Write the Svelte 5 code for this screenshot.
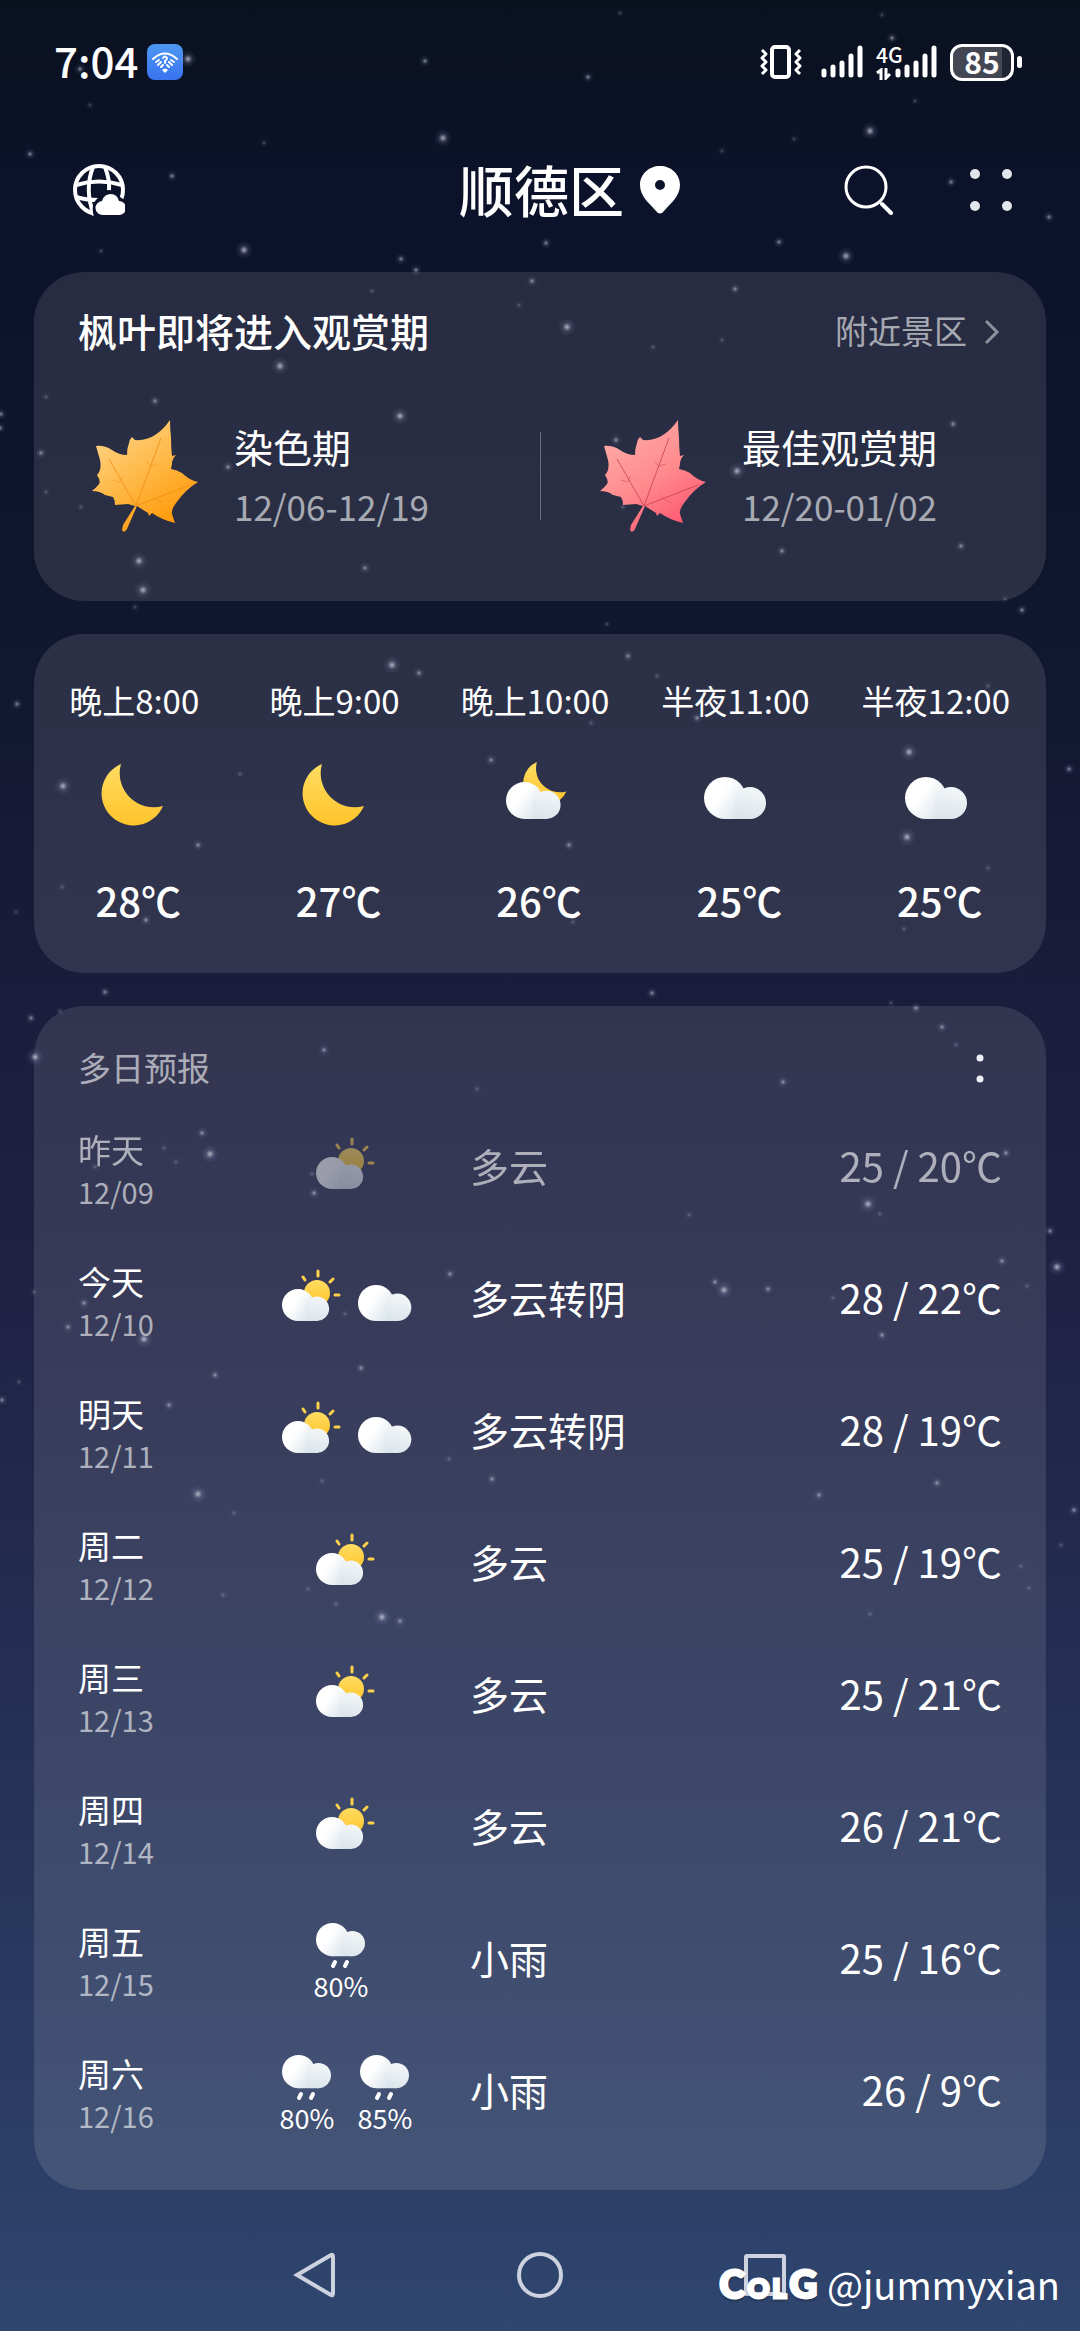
<script>
	const seasons = [
		{ name: '染色期', range: '12/06-12/19', leaf: 'gold' },
		{ name: '最佳观赏期', range: '12/20-01/02', leaf: 'red' }
	];

	const hours = [
		{ time: '晚上8:00', icon: 'moon', temp: 28 },
		{ time: '晚上9:00', icon: 'moon', temp: 27 },
		{ time: '晚上10:00', icon: 'cloudmoon', temp: 26 },
		{ time: '半夜11:00', icon: 'cloud', temp: 25 },
		{ time: '半夜12:00', icon: 'cloud', temp: 25 }
	];

	const days = [
		{ day: '昨天', date: '12/09', icons: [{ type: 'suncloud' }], text: '多云', high: 25, low: 20, past: true },
		{ day: '今天', date: '12/10', icons: [{ type: 'suncloud' }, { type: 'cloud' }], text: '多云转阴', high: 28, low: 22 },
		{ day: '明天', date: '12/11', icons: [{ type: 'suncloud' }, { type: 'cloud' }], text: '多云转阴', high: 28, low: 19 },
		{ day: '周二', date: '12/12', icons: [{ type: 'suncloud' }], text: '多云', high: 25, low: 19 },
		{ day: '周三', date: '12/13', icons: [{ type: 'suncloud' }], text: '多云', high: 25, low: 21 },
		{ day: '周四', date: '12/14', icons: [{ type: 'suncloud' }], text: '多云', high: 26, low: 21 },
		{ day: '周五', date: '12/15', icons: [{ type: 'rain', chance: 80 }], text: '小雨', high: 25, low: 16 },
		{
			day: '周六',
			date: '12/16',
			icons: [
				{ type: 'rain', chance: 80 },
				{ type: 'rain', chance: 85 }
			],
			text: '小雨',
			high: 26,
			low: 9
		}
	];

	// x, y, brightness (1 = faint, 2 = normal, 3 = bright)
	const stars = [
		[188, 59, 3], [425, 61, 2], [443, 138, 3], [90, 105, 1], [30, 154, 2], [172, 176, 2], [264, 143, 1],
		[244, 250, 3], [101, 251, 1], [80, 69, 2], [401, 259, 2], [620, 13, 1], [882, 15, 1], [892, 38, 2],
		[588, 77, 2], [915, 101, 1], [870, 131, 3], [794, 139, 1], [722, 151, 1], [951, 182, 2], [1049, 217, 2],
		[546, 243, 2], [779, 242, 2], [846, 256, 3], [416, 270, 2], [532, 281, 2], [372, 291, 1], [519, 305, 1],
		[280, 366, 3], [155, 401, 2], [400, 416, 3], [46, 397, 1], [1, 414, 2], [0, 428, 2], [41, 453, 2],
		[228, 467, 2], [46, 492, 1], [81, 507, 1], [313, 519, 1], [139, 561, 3], [143, 590, 3], [135, 607, 1],
		[365, 568, 2], [735, 289, 2], [567, 327, 3], [722, 340, 1], [653, 347, 1], [616, 440, 2], [737, 471, 3],
		[820, 437, 1], [953, 424, 2], [623, 507, 1], [782, 551, 2], [961, 546, 2], [1005, 599, 1], [1022, 610, 2],
		[392, 665, 3], [419, 673, 2], [17, 704, 2], [491, 760, 2], [240, 774, 1], [63, 786, 3], [198, 845, 2],
		[62, 887, 1], [16, 912, 1], [146, 920, 2], [109, 715, 1], [607, 624, 1], [628, 656, 2], [657, 676, 1],
		[988, 686, 1], [697, 718, 2], [591, 723, 1], [909, 752, 3], [1069, 769, 2], [569, 845, 2], [907, 837, 3],
		[988, 868, 1], [573, 922, 1], [904, 929, 1], [105, 992, 2], [31, 1018, 2], [60, 1011, 1], [35, 1057, 3],
		[324, 1050, 2], [477, 1089, 1], [202, 1133, 2], [210, 1154, 3], [164, 1148, 1], [176, 1162, 1],
		[314, 1193, 2], [312, 1174, 1], [95, 1167, 1], [95, 1281, 1], [84, 1303, 2], [68, 1327, 2], [144, 1339, 3],
		[34, 1292, 1], [450, 1274, 2], [345, 1314, 1], [361, 1368, 2], [215, 1375, 2], [19, 1382, 1], [652, 993, 2],
		[891, 1003, 1], [916, 1008, 2], [942, 1027, 2], [956, 1045, 1], [783, 1082, 2], [1006, 1153, 2],
		[868, 1204, 3], [880, 1214, 1], [689, 1215, 1], [1050, 1231, 2], [1002, 1261, 2], [1057, 1267, 3],
		[1027, 1286, 1], [715, 1282, 2], [724, 1290, 3], [768, 1289, 2], [833, 1298, 1], [882, 1335, 2],
		[169, 1405, 2], [2, 1400, 2], [198, 1494, 3], [234, 1513, 1], [322, 1481, 1], [449, 1459, 1],
		[492, 1479, 2], [819, 1495, 2], [937, 1483, 2], [1074, 1510, 2], [1061, 1545, 1], [1029, 1588, 1],
		[223, 1595, 1], [308, 1589, 1], [336, 1604, 1], [382, 1617, 3], [400, 1621, 2], [870, 1614, 1],
		[1021, 1566, 1]
	];

	const radius = [0, 5, 6, 9];
	const opacity = [0, 0.25, 0.5, 0.65];
</script>

{#snippet cloudShape()}
	<circle cx="21" cy="21" r="21" fill="url(#cloud-big)" />
	<path d="M21 42 L21 30 L42 16 L50 30 L46 42 Z" fill="url(#cloud-big)" />
	<circle cx="46" cy="26" r="16" fill="url(#cloud-small)" />
{/snippet}

{#snippet moonShape()}
	<path d="M27 10 A32 32 0 1 0 69 52 A34 34 0 0 1 27 10 Z" fill="url(#moon)" />
{/snippet}

{#snippet leafShape(color)}
	<path
		fill="url(#leaf-{color})"
		d="M92 2 Q92 12 93 19 Q93 30 94 38 L98 37 Q94 41 94 46 L93 51 Q99 52 104 55 Q111 62 120 64 Q108 71 98 85 Q93 92 94 96 L97 105 Q84 102 74 95 L71 98 L70 95 L59 88 L49 111 Q46 116 44 112 L45 107 L57 88 L50 86 L37 87 Q37 82 35 79 L27 77 Q22 73 14 73 Q19 69 21 66 Q23 63 19 57 Q24 52 22 42 L18 28 Q26 27 34 32 Q41 37 49 37 Q49 30 51 25 Q51 22 54 19 L57 22 Q68 23 77 17 Q85 12 92 2 Z"
	/>
	<g class="veins {color}">
		<path d="M58 88 L83 20 M58 88 L31 41 M58 88 L112 67" />
		<path d="M69 44 L73 48 L80 46 M35 62 L42 64 L44 58 M74 77 L78 81 L85 85" opacity="0.6" />
	</g>
{/snippet}

<svg class="defs" width="0" height="0" aria-hidden="true">
	<defs>
		<linearGradient id="cloud-big" gradientUnits="userSpaceOnUse" x1="4" y1="10" x2="44" y2="38">
			<stop offset="0.3" stop-color="#ffffff" />
			<stop offset="1" stop-color="#d3dfe8" />
		</linearGradient>
		<linearGradient id="cloud-small" gradientUnits="userSpaceOnUse" x1="48" y1="10" x2="40" y2="42">
			<stop offset="0" stop-color="#f3f6f8" />
			<stop offset="1" stop-color="#dbe5ec" />
		</linearGradient>
		<linearGradient id="moon" x1="0" y1="0" x2="0" y2="1">
			<stop offset="0" stop-color="#ffdc62" />
			<stop offset="1" stop-color="#ffc42a" />
		</linearGradient>
		<linearGradient id="leaf-gold" x1="0.3" y1="0.1" x2="0.8" y2="0.9">
			<stop offset="0" stop-color="#ffcd78" />
			<stop offset="0.5" stop-color="#ffb53f" />
			<stop offset="1" stop-color="#ff9908" />
		</linearGradient>
		<linearGradient id="leaf-red" x1="0.3" y1="0.1" x2="0.8" y2="0.9">
			<stop offset="0" stop-color="#ffa6a2" />
			<stop offset="0.5" stop-color="#ff8a8e" />
			<stop offset="1" stop-color="#ff5a72" />
		</linearGradient>
		<linearGradient id="badge" x1="0" y1="0" x2="0" y2="1">
			<stop offset="0" stop-color="#4f97f2" />
			<stop offset="1" stop-color="#3873f0" />
		</linearGradient>
		<radialGradient id="star">
			<stop offset="0" stop-color="#ffffff" />
			<stop offset="0.2" stop-color="#d5d8ec" stop-opacity="0.75" />
			<stop offset="0.5" stop-color="#a9aed0" stop-opacity="0.22" />
			<stop offset="1" stop-color="#a9aed0" stop-opacity="0" />
		</radialGradient>
	</defs>
</svg>

<div class="app">
	<svg class="stars" aria-hidden="true">
		{#each stars as [x, y, size]}
			<circle cx={x} cy={y} r={radius[size]} fill="url(#star)" opacity={opacity[size]} />
		{/each}
	</svg>

	<div class="status">
		<span class="clock">7:04</span>
		<svg class="badge" viewBox="0 0 36 36" width="36" height="36">
			<rect width="36" height="36" rx="8" fill="url(#badge)" />
			<g fill="none" stroke="#fff" stroke-width="2" stroke-linecap="round">
				<path d="M6 15 Q18 4 30 15" />
				<path d="M9 18 L12 16 M11 21 L14 18 M14 23 L16 21 M27 18 L24 16 M25 21 L22 18 M22 23 L20 21" />
				<path d="M16 14 Q18 11 20 14 Q20 16 18 17 L18 19" />
			</g>
			<path d="M15 26 Q18 23 21 26 L18 29 Z" fill="#fff" />
		</svg>
		<div class="indicators">
			<svg width="42" height="36" viewBox="0 0 42 36" fill="none" stroke="#fff">
				<rect x="12" y="3" width="17" height="30" rx="3" stroke-width="4" />
				<path d="M2 6 l4 4 l-4 4 l4 4 l-4 4 l4 4 l-4 4 M40 6 l-4 4 l4 4 l-4 4 l4 4 l-4 4 l4 4" stroke-width="3" stroke-linejoin="round" />
			</svg>
			<svg class="first" width="43" height="36" viewBox="0 0 43 36" stroke="#fff" stroke-width="5" stroke-linecap="round">
				<path d="M3 27 V31 M12 23 V31 M21 19 V31 M30 12 V31 M39 4 V31" />
			</svg>
			<div class="network">
				<span>4G</span>
				<svg width="15" height="12" viewBox="0 0 15 12" fill="none" stroke="#fff" stroke-width="3">
					<path d="M1 5 L5 2 V12 M10 0 V10 L14 6" />
				</svg>
			</div>
			<svg width="43" height="36" viewBox="0 0 43 36" stroke="#fff" stroke-width="5" stroke-linecap="round">
				<path d="M3 27 V31 M12 23 V31 M21 19 V31 M30 12 V31 M39 4 V31" />
			</svg>
			<span class="battery">85</span>
			<span class="nub"></span>
		</div>
	</div>

	<header>
		<button class="globe" aria-label="城市天气">
			<svg width="52" height="52" viewBox="0 0 52 52">
				<mask id="cutout">
					<rect width="52" height="52" fill="#fff" />
					<path d="M21 53 Q17 40 25 34 Q28 26 36 26 Q44 26 47 33 L53 37 V53 Z" fill="#000" />
				</mask>
				<g mask="url(#cutout)" fill="none" stroke="#fff" stroke-width="4">
					<circle cx="26" cy="26" r="24" />
					<path d="M20 3 Q11 26 21 51 M32 3 Q37 16 36 27" />
					<path d="M3 21 Q26 14 49 21 M3 33 Q12 36 26 36" />
				</g>
				<path d="M30 51 A7 7 0 0 1 29 37 Q31 30 38 30 Q44 30 46 37 A7 7 0 0 1 46 51 Z" fill="#fff" />
			</svg>
		</button>
		<h1>顺德区</h1>
		<div class="tools">
			<svg class="pin" width="40" height="50" viewBox="0 0 40 50">
				<path
					fill="#fff"
					fill-rule="evenodd"
					d="M20 1 C31 1 40 9 40 20 C40 31 31 38 24 46 Q20 51 16 46 C9 38 0 31 0 20 C0 9 9 1 20 1 Z M20 15 A5 5 0 1 0 20 25 A5 5 0 1 0 20 15 Z"
				/>
			</svg>
			<button aria-label="搜索">
				<svg width="50" height="50" viewBox="0 0 50 50" fill="none" stroke="#fff" stroke-width="3">
					<circle cx="22" cy="22" r="20" />
					<path d="M38 39 L47 48" stroke-width="4" stroke-linecap="round" />
				</svg>
			</button>
			<button aria-label="更多">
				<svg width="42" height="42" viewBox="0 0 42 42" fill="#e4e6ee">
					<circle cx="5" cy="5" r="5" />
					<circle cx="37" cy="5" r="5" />
					<circle cx="5" cy="37" r="5" />
					<circle cx="37" cy="37" r="5" />
				</svg>
			</button>
		</div>
	</header>

	<main>
		<section class="card maple">
			<div class="title">
				<h2>枫叶即将进入观赏期</h2>
				<a href="#spots">
					<span>附近景区</span>
					<svg width="17" height="26" viewBox="0 0 17 26" fill="none" stroke="currentColor" stroke-width="3" opacity="0.8">
						<path d="M1 2 L12 13 L1 24" />
					</svg>
				</a>
			</div>
			<div class="seasons">
				{#each seasons as season}
					<div class="season">
						<svg width="120" height="120" viewBox="0 0 120 120">
							{@render leafShape(season.leaf)}
						</svg>
						<div>
							<h3>{season.name}</h3>
							<p>{season.range}</p>
						</div>
					</div>
				{/each}
			</div>
		</section>

		<section class="card hourly">
			{#each hours as hour}
				<div class="hour">
					<span class="time">{hour.time}</span>
					<svg width="80" height="80" viewBox="0 0 80 80">
						{#if hour.icon == 'moon'}
							{@render moonShape()}
						{:else if hour.icon == 'cloudmoon'}
							<g transform="translate(23 1) scale(0.7)">{@render moonShape()}</g>
							<g transform="translate(11 28) scale(0.88)">{@render cloudShape()}</g>
						{:else}
							<g transform="translate(9 23)">{@render cloudShape()}</g>
						{/if}
					</svg>
					<span class="temp">{hour.temp}℃</span>
				</div>
			{/each}
		</section>

		<section class="card daily">
			<div class="title">
				<h2>多日预报</h2>
				<button aria-label="更多选项">
					<svg width="42" height="42" viewBox="0 0 42 42" fill="#eef0f8">
						<circle cx="20" cy="10" r="3.5" />
						<circle cx="20" cy="31" r="3.5" />
					</svg>
				</button>
			</div>
			<ul>
				{#each days as item}
					<li class:past={item.past}>
						<div class="day">
							<span>{item.day}</span>
							<small>{item.date}</small>
						</div>
						<div class="icons" class:single={item.icons.length == 1}>
							{#each item.icons as icon}
								<div class="icon">
									{#if icon.type == 'rain'}
										<svg width="68" height="54" viewBox="0 0 68 54">
											<g transform="translate(9 7) scale(0.79)">{@render cloudShape()}</g>
											<path d="M28 46 L26 50 M40 46 L38 50" stroke="#fff" stroke-width="4" stroke-linecap="round" />
										</svg>
										<span>{icon.chance}%</span>
									{:else if icon.type == 'suncloud'}
										<svg width="68" height="68" viewBox="0 0 68 68">
											<circle cx="44" cy="28" r="13" fill="url(#moon)" />
											<path
												d="M45 6 V11 M30 12 L32 15 M57 17 L60 14 M62 30 L66 30"
												stroke="#ffd04a"
												stroke-width="3"
												stroke-linecap="round"
											/>
											<g transform="translate(9 24) scale(0.76)">{@render cloudShape()}</g>
										</svg>
									{:else}
										<svg width="68" height="68" viewBox="0 0 68 68">
											<g transform="translate(7 20) scale(0.86)">{@render cloudShape()}</g>
										</svg>
									{/if}
								</div>
							{/each}
						</div>
						<span class="text">{item.text}</span>
						<span class="range">{item.high} / {item.low}℃</span>
					</li>
				{/each}
			</ul>
		</section>
	</main>

	<nav>
		<button aria-label="返回">
			<svg width="46" height="46" viewBox="0 0 46 46">
				<path d="M5 23 L39 3 Q41 2 41 5 V41 Q41 44 39 43 Z" />
			</svg>
		</button>
		<button aria-label="主页">
			<svg width="46" height="46" viewBox="0 0 46 46"><circle cx="23" cy="23" r="21" /></svg>
		</button>
		<button aria-label="最近任务">
			<svg width="46" height="46" viewBox="0 0 46 46"><rect x="4" y="4" width="38" height="38" rx="1" /></svg>
		</button>
	</nav>

	<div class="watermark">
		<span class="logo"><b>C</b><i>O</i><i>L</i><b>G</b></span>
		<span>@jummyxian</span>
	</div>
</div>

<style>
	:global(body) {
		background: #0a111f;
	}

	.app {
		position: relative;
		overflow: hidden;
		color: #fff;
		font-family: 'Noto Sans CJK SC', 'Noto Sans', sans-serif;
		background: linear-gradient(
			#0a111f 0%,
			#0c122a 8%,
			#10162e 25%,
			#191c3a 42%,
			#202345 57%,
			#253055 74%,
			#2c3f66 93%,
			#2f4670 100%
		);
	}

	.defs {
		position: absolute;
	}

	.stars {
		position: absolute;
		inset: 0;
		width: 100%;
		height: 100%;
		pointer-events: none;
		z-index: 1;
	}

	svg {
		display: block;
		flex: none;
	}

	h1,
	h2,
	h3,
	p,
	ul {
		margin: 0;
		padding: 0;
		font-weight: 400;
	}

	button {
		padding: 0;
		border: 0;
		background: none;
		color: inherit;
		font: inherit;
		cursor: pointer;
	}

	/* status bar */
	.status {
		display: flex;
		align-items: center;
		height: 124px;
		padding: 0 58px 0 54px;
	}

	.clock {
		padding-bottom: 6px;
		font-size: 42px;
		font-weight: 500;
	}

	.badge {
		margin-left: 9px;
	}

	.indicators {
		display: flex;
		align-items: center;
		margin-left: auto;
	}

	.first {
		margin: 0 12px 0 19px;
	}

	.network {
		width: 19px;
	}

	.network span {
		display: block;
		font-size: 21px;
		font-weight: 500;
		line-height: 20px;
		padding-bottom: 4px;
	}

	.battery {
		box-sizing: border-box;
		width: 64px;
		height: 37px;
		margin-left: 12px;
		border: 3px solid #fff;
		border-radius: 12px;
		background: linear-gradient(90deg, #434754 85%, #1f2533 85%);
		font-size: 30px;
		font-weight: 700;
		line-height: 29px;
		text-align: center;
	}

	.nub {
		width: 5px;
		height: 12px;
		margin-left: 3px;
		border-radius: 3px;
		background: #fff;
	}

	/* city header */
	header {
		display: grid;
		grid-template-columns: 1fr auto 1fr;
		align-items: center;
		height: 132px;
		padding: 0 70px 0 73px;
	}

	.globe {
		justify-self: start;
	}

	h1 {
		padding-bottom: 4px;
		font-size: 55px;
		font-weight: 500;
		line-height: 60px;
	}

	.tools {
		display: flex;
		align-items: center;
		gap: 76px;
		margin-right: -2px;
	}

	.pin {
		margin: 0 auto 0 16px;
	}

	/* cards */
	main {
		display: flex;
		flex-direction: column;
		gap: 33px;
		padding: 16px 34px 0;
	}

	.card {
		border-radius: 50px;
		background: rgba(255, 255, 255, 0.11);
	}

	.title {
		display: flex;
		align-items: center;
		justify-content: space-between;
	}

	.title h2,
	.title span {
		padding-bottom: 4px;
	}

	.maple {
		padding: 30px 44px 63px;
	}

	.maple .title {
		height: 60px;
		margin-bottom: 56px;
	}

	.maple h2 {
		font-size: 39px;
		font-weight: 500;
	}

	.maple a {
		display: flex;
		align-items: center;
		gap: 18px;
		color: rgba(255, 255, 255, 0.6);
		font-size: 33px;
		text-decoration: none;
	}

	.seasons {
		display: grid;
		grid-template-columns: 1fr 1fr;
	}

	.season {
		position: relative;
		display: flex;
		gap: 36px;
	}

	.season + .season {
		padding-left: 46px;
	}

	.season + .season::before {
		content: '';
		position: absolute;
		left: 0;
		top: 14px;
		width: 1px;
		height: 88px;
		background: rgba(255, 255, 255, 0.3);
	}

	h3 {
		font-size: 39px;
		line-height: 56px;
	}

	.season p {
		color: rgba(255, 255, 255, 0.6);
		font-size: 35px;
		line-height: 64px;
	}

	.veins {
		fill: none;
		stroke: #f08a12;
		stroke-width: 1;
		opacity: 0.8;
	}

	.veins.red {
		stroke: #c8404f;
	}

	/* hourly */
	.hourly {
		display: grid;
		grid-template-columns: repeat(5, 1fr);
		padding: 38px 10px 42px 0;
	}

	.hour {
		display: flex;
		flex-direction: column;
		align-items: center;
	}

	.time {
		font-size: 33px;
		line-height: 56px;
		white-space: nowrap;
	}

	.hour svg {
		margin: 26px 0 36px;
	}

	.temp {
		padding-left: 8px;
		font-size: 40px;
		font-weight: 500;
		line-height: 61px;
	}

	/* daily */
	.daily {
		padding: 0 44px 33px;
	}

	.daily .title {
		height: 95px;
		padding-top: 31px;
		box-sizing: border-box;
	}

	.daily h2 {
		color: rgba(255, 255, 255, 0.6);
		font-size: 33px;
	}

	li {
		display: grid;
		grid-template-columns: 195px 197px 1fr auto;
		align-items: center;
		height: 132px;
	}

	.day {
		display: flex;
		flex-direction: column;
		padding-top: 6px;
		font-size: 33px;
		line-height: 42px;
	}

	small {
		color: rgba(255, 255, 255, 0.6);
		font-size: 29px;
	}

	.icons {
		display: flex;
		gap: 10px;
	}

	.single {
		padding-left: 34px;
	}

	.icon {
		width: 68px;
		font-size: 27px;
		line-height: 32px;
		text-align: center;
	}

	.text {
		padding-bottom: 4px;
		font-size: 39px;
	}

	.range {
		padding-bottom: 4px;
		font-size: 40px;
	}

	.past span {
		opacity: 0.6;
	}

	.past svg {
		opacity: 0.5;
	}

	/* navigation */
	nav {
		display: flex;
		justify-content: center;
		gap: 179px;
		padding: 62px 0 33px;
	}

	nav svg {
		fill: none;
		stroke: #cdd2df;
		stroke-width: 4;
	}

	.watermark {
		position: absolute;
		right: 20px;
		bottom: 16px;
		display: flex;
		align-items: center;
		gap: 10px;
		font-size: 38px;
		line-height: 54px;
		z-index: 2;
	}

	.logo {
		display: flex;
		align-items: baseline;
		gap: 3px;
		padding-top: 4px;
		font-family: Lato, 'Liberation Sans', sans-serif;
		font-size: 38px;
		font-weight: 900;
		-webkit-text-stroke: 3px #fff;
		text-shadow: 0 2px 3px rgba(0, 0, 0, 0.6);
	}

	.logo b {
		font-weight: 900;
	}

	.logo i {
		font-size: 27px;
		font-style: normal;
	}
</style>
